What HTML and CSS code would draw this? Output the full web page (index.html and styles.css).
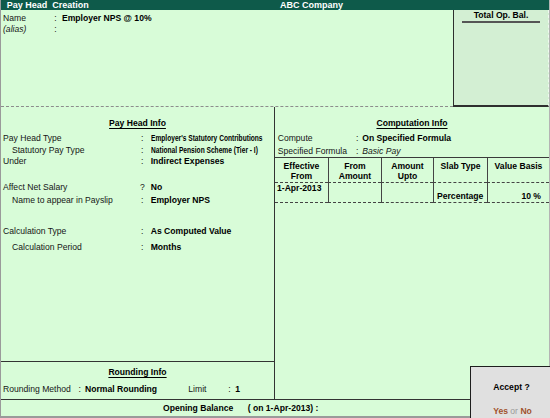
FILE: index.html
```html
<!DOCTYPE html>
<html>
<head>
<meta charset="utf-8">
<link rel="stylesheet" href="styles.css">
</head>
<body>
<div class="app">
  <div class="titlebar">
    <div class="t-left">Pay Head&nbsp; Creation</div>
    <div class="t-right">ABC Company</div>
  </div>

  <div class="top">
    <div class="top-left">
      <div class="name-grid">
        <span class="lbl">Name</span><span class="col">:</span><span class="val b">Employer NPS @ 10%</span>
        <span class="lbl i">(alias)</span><span class="col">:</span><span class="val"></span>
      </div>
    </div>
    <div class="total">
      <span class="total-head">Total Op. Bal.</span>
    </div>
  </div>

  <div class="mid">
    <div class="mid-left">
      <div class="phi">
        <div class="heading"><span class="u">Pay Head Info</span></div>
        <div class="row r1"><span class="lbl">Pay Head Type</span><span class="col">:</span><span class="val b"><span class="cond">Employer's Statutory Contributions</span></span></div>
        <div class="row r2"><span class="lbl ind">Statutory Pay Type</span><span class="col">:</span><span class="val b"><span class="cond">National Pension Scheme (Tier - I)</span></span></div>
        <div class="row r3"><span class="lbl">Under</span><span class="col">:</span><span class="val b">Indirect Expenses</span></div>
        <div class="row r4"><span class="lbl">Affect Net Salary</span><span class="col q">?</span><span class="val b">No</span></div>
        <div class="row r5"><span class="lbl ind">Name to appear in Payslip</span><span class="col">:</span><span class="val b">Employer NPS</span></div>
        <div class="row r6"><span class="lbl">Calculation Type</span><span class="col">:</span><span class="val b">As Computed Value</span></div>
        <div class="row r7"><span class="lbl ind">Calculation Period</span><span class="col">:</span><span class="val b">Months</span></div>
      </div>
      <div class="rounding">
        <div class="heading"><span class="u">Rounding Info</span></div>
        <div class="round-row">
          <span class="lbl">Rounding Method</span><span class="col">:</span><span class="val b">Normal Rounding</span>
          <span class="lbl">Limit</span><span class="col">:</span><span class="val b">1</span>
        </div>
      </div>
    </div>

    <div class="mid-right">
      <div class="heading"><span class="u">Computation Info</span></div>
      <div class="crow c1"><span class="lbl">Compute</span><span class="col">:</span><span class="val b">On Specified Formula</span></div>
      <div class="crow c2"><span class="lbl">Specified Formula</span><span class="col">:</span><span class="val i">Basic Pay</span></div>
      <div class="slab">
        <div class="th">Effective<br>From</div>
        <div class="th">From<br>Amount</div>
        <div class="th">Amount<br>Upto</div>
        <div class="th">Slab Type</div>
        <div class="th">Value Basis</div>
        <div class="td top-cell">1-Apr-2013</div>
        <div class="td"></div>
        <div class="td"></div>
        <div class="td bottom-cell">Percentage</div>
        <div class="td bottom-cell right">10 %</div>
      </div>
    </div>
  </div>

  <div class="footer">
    <span>Opening Balance</span><span class="ob-date">( on 1-Apr-2013) :</span>
  </div>

  <div class="accept">
    <div class="accept-q">Accept ?</div>
    <div class="accept-a"><span class="yn">Yes</span> <span class="or">or</span> <span class="yn">No</span></div>
  </div>
</div>
</body>
</html>
```

FILE: styles.css
```css
* { box-sizing: border-box; }
html, body { margin: 0; padding: 0; }
body {
  width: 550px;
  height: 418px;
  overflow: hidden;
  font-family: "Liberation Sans", Arial, sans-serif;
  font-size: 8.6px;
  color: #161616;
  background: #d8fcd8;
}
.app {
  position: relative;
  display: flex;
  flex-direction: column;
  width: 550px;
  height: 418px;
  background: #d8fcd8;
  border-left: 1px solid #9a9a9a;
  border-right: 1px solid #b4b4b4;
  border-bottom: 2px solid #9a9a9a;
}
.b { font-weight: bold; color: #000; }
.i { font-style: italic; }
.u { text-decoration: underline; text-underline-offset: 1.5px; }

.titlebar {
  flex: none;
  height: 10px;
  display: flex;
  background: #0e5a4a;
  color: #fff;
  font-weight: bold;
  font-size: 9px;
  line-height: 10px;
}
.t-left { width: 279px; padding-left: 5.7px; white-space: pre; }

.top { flex: none; height: 97px; display: flex; }
.top-left {
  flex: 1;
  border-bottom: 1px dashed #8c8c8c;
  padding: 3px 0 0 2px;
}
.name-grid {
  display: grid;
  grid-template-columns: 51.3px 7.7px auto;
  line-height: 11px;
}
.total {
  width: 96px;
  background: #d3efd3;
  border-left: 1px solid #2e2e2e;
  border-bottom: 2px solid #2e2e2e;
  border-right: 1px dashed #f0f8f0;
  text-align: center;
}
.total-head {
  display: inline-block;
  font-weight: bold;
  color: #000;
  line-height: 10.5px;
  padding: 0 12px;
  border-bottom: 2px solid #555;
}

.mid { flex: none; height: 292px; display: flex; }
.mid-left {
  width: 274px;
  display: flex;
  flex-direction: column;
  border-right: 1px solid #333;
}
.heading { text-align: center; font-weight: bold; color: #000; line-height: 11px; }
.phi { flex: 1; padding: 11px 0 0 2px; }
.phi .heading { padding-right: 2px; }
.row {
  display: grid;
  grid-template-columns: 138px 9.7px auto;
  line-height: 11px;
  white-space: nowrap;
}
.ind { padding-left: 9px; }
.q { margin-left: -1px; }
.cond { display: inline-block; transform: scaleX(0.77); transform-origin: left center; }
.r1 { margin-top: 4px; }
.r2 { margin-top: 1.4px; }
.r3 { margin-top: 0; }
.r4 { margin-top: 14.6px; }
.r5 { margin-top: 1.7px; }
.r6 { margin-top: 20.7px; }
.r7 { margin-top: 4.6px; }

.rounding {
  flex: none;
  height: 38px;
  border-top: 1px solid #333;
  padding: 5px 0 0 2px;
}
.rounding .heading { padding-right: 2px; }
.round-row {
  display: grid;
  grid-template-columns: 75.6px 6.4px 103.3px 40px 7px auto;
  line-height: 11px;
  margin-top: 5.5px;
  white-space: nowrap;
}

.mid-right { flex: 1; padding-top: 11px; }
.crow {
  display: grid;
  grid-template-columns: 78.3px 6.3px auto;
  line-height: 11px;
  padding-left: 2.7px;
}
.c1 { margin-top: 4px; }
.c2 { margin-top: 2px; }
.slab {
  display: grid;
  grid-template-columns: 53px 53px 52px 54px 1fr;
  grid-template-rows: 25px 20px;
  border-top: 1px solid #3a3a3a;
}
.th {
  text-align: center;
  font-weight: bold;
  color: #000;
  line-height: 9.5px;
  padding-top: 4px;
  border-bottom: 1px dashed #444;
  border-left: 1px solid #444;
}
.td {
  border-left: 1px solid #444;
  border-bottom: 1px dashed #444;
  font-weight: bold;
  color: #000;
  line-height: 11px;
  display: flex;
}
.th:first-child, .td:nth-child(6) { border-left: none; }
.top-cell { align-items: flex-start; padding-left: 2px; }
.bottom-cell { align-items: flex-end; padding-left: 3px; padding-bottom: 0.5px; }
.right { justify-content: flex-end; padding-right: 8px; }

.footer {
  flex: none;
  height: 17px;
  border-top: 1px solid #333;
  padding-left: 162px;
  line-height: 16px;
  font-weight: bold;
  color: #000;
  white-space: nowrap;
}
.ob-date { margin-left: 14.5px; }

.accept {
  position: absolute;
  right: -1px;
  bottom: -2px;
  width: 80px;
  height: 52px;
  background: #e0e0e0;
  border-top: 1px solid #1e1e1e;
  border-left: 1px solid #1e1e1e;
  display: flex;
  flex-direction: column;
  align-items: center;
  font-weight: bold;
  color: #000;
}
.accept-q { margin-top: 15px; line-height: 11px; padding-left: 2px; }
.accept-a { margin-top: 13px; line-height: 11px; padding-left: 4px; }
.yn { color: #a0522d; }
.or { color: #9a9a9a; font-weight: normal; }
```
